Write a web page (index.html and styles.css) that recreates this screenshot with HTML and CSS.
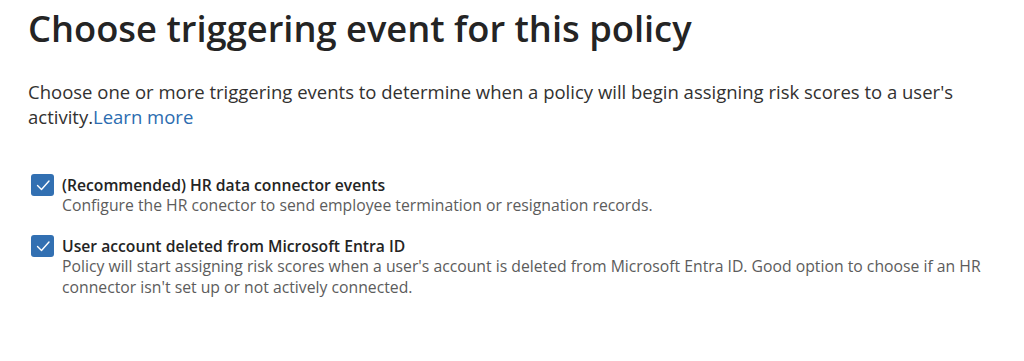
FILE: index.html
```html
<!DOCTYPE html>
<html lang="en">

<head>
    <meta charset="UTF-8">
    <meta name="viewport" content="width=device-width, initial-scale=1.0">
    <title>Choose triggering event for this policy</title>
    <link rel="stylesheet" href="styles.css">
</head>

<body>
    <main class="page">
        <h1>Choose triggering event for this policy</h1>
        <p class="intro">Choose one or more triggering events to determine when a policy will begin assigning risk scores to a user's activity.<a href="#">Learn more</a></p>

        <div class="options">
            <label class="option">
                <span class="checkbox">
                    <svg viewBox="0 0 22 22" width="22" height="22"><path d="M5.5 11.5 L9.5 15.5 L17 7" /></svg>
                </span>
                <span class="option-text">
                    <span class="option-title">(Recommended) HR data connector events</span>
                    <span class="option-desc">Configure the HR conector to send employee termination or resignation records.</span>
                </span>
            </label>
            <label class="option">
                <span class="checkbox">
                    <svg viewBox="0 0 22 22" width="22" height="22"><path d="M5.5 11.5 L9.5 15.5 L17 7" /></svg>
                </span>
                <span class="option-text">
                    <span class="option-title">User account deleted from Microsoft Entra ID</span>
                    <span class="option-desc">Policy will start assigning risk scores when a user's account is deleted from Microsoft Entra ID. Good option to choose if an HR connector isn't set up or not actively connected.</span>
                </span>
            </label>
        </div>
    </main>
</body>

</html>
```
FILE: styles.css
```css
body {
    font-family: 'Open Sans', 'Noto Sans', sans-serif;
    background-color: #ffffff;
    color: #242424;
    margin: 0;
    padding: 0;
}

.page {
    padding: 0 28px;
}

h1 {
    margin: 6px 0 0;
    font-size: 36.3px;
    font-weight: 600;
    line-height: 44px;
    color: #242424;
}

.intro {
    margin: 29px 0 0;
    font-size: 18.5px;
    line-height: 25px;
    color: #323130;
}

.intro a {
    color: #2b6cb0;
    text-decoration: none;
}

.options {
    margin-top: 45px;
    display: flex;
    flex-direction: column;
    gap: 19px;
}

.option {
    display: flex;
    align-items: flex-start;
    gap: 8px;
    padding-left: 3px;
}

.checkbox {
    flex: none;
    width: 23px;
    height: 22px;
    border-radius: 3px;
    background-color: #3270b2;
    display: flex;
    align-items: center;
    justify-content: center;
}

.checkbox svg path {
    fill: none;
    stroke: #ffffff;
    stroke-width: 1.4;
    stroke-linecap: round;
    stroke-linejoin: round;
}

.option-text {
    display: flex;
    flex-direction: column;
    padding-top: 1px;
}

.option-title {
    font-size: 15.7px;
    font-weight: 600;
    line-height: 20px;
    color: #242424;
}

.option-desc {
    font-size: 15.75px;
    line-height: 21px;
    color: #5c5c5c;
}
```
